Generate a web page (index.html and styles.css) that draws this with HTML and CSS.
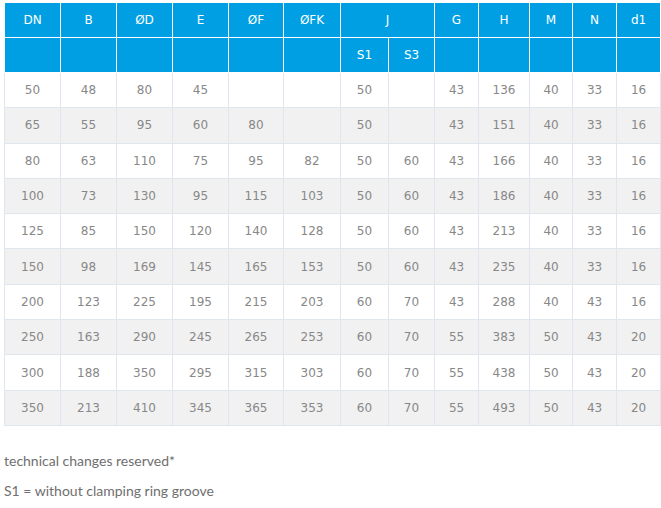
FILE: index.html
```html
<!DOCTYPE html>
<html>
<head>
<meta charset="utf-8">
<link rel="stylesheet" href="styles.css">
</head>
<body>
<div class="wrap">
<table class="dims">
<colgroup>
<col style="width:56px"><col style="width:56px"><col style="width:56px"><col style="width:56px"><col style="width:55px"><col style="width:57px"><col style="width:48px"><col style="width:46px"><col style="width:44px"><col style="width:51px"><col style="width:43px"><col style="width:44px"><col style="width:44px">
</colgroup>
<thead>
<tr class="h1"><th>DN</th><th>B</th><th>ØD</th><th>E</th><th>ØF</th><th>ØFK</th><th colspan="2">J</th><th>G</th><th>H</th><th>M</th><th>N</th><th>d1</th></tr>
<tr class="h2"><th></th><th></th><th></th><th></th><th></th><th></th><th>S1</th><th>S3</th><th></th><th></th><th></th><th></th><th></th></tr>
</thead>
<tbody>
<tr><td>50</td><td>48</td><td>80</td><td>45</td><td></td><td></td><td>50</td><td></td><td>43</td><td>136</td><td>40</td><td>33</td><td>16</td></tr>
<tr><td>65</td><td>55</td><td>95</td><td>60</td><td>80</td><td></td><td>50</td><td></td><td>43</td><td>151</td><td>40</td><td>33</td><td>16</td></tr>
<tr><td>80</td><td>63</td><td>110</td><td>75</td><td>95</td><td>82</td><td>50</td><td>60</td><td>43</td><td>166</td><td>40</td><td>33</td><td>16</td></tr>
<tr><td>100</td><td>73</td><td>130</td><td>95</td><td>115</td><td>103</td><td>50</td><td>60</td><td>43</td><td>186</td><td>40</td><td>33</td><td>16</td></tr>
<tr><td>125</td><td>85</td><td>150</td><td>120</td><td>140</td><td>128</td><td>50</td><td>60</td><td>43</td><td>213</td><td>40</td><td>33</td><td>16</td></tr>
<tr><td>150</td><td>98</td><td>169</td><td>145</td><td>165</td><td>153</td><td>50</td><td>60</td><td>43</td><td>235</td><td>40</td><td>33</td><td>16</td></tr>
<tr><td>200</td><td>123</td><td>225</td><td>195</td><td>215</td><td>203</td><td>60</td><td>70</td><td>43</td><td>288</td><td>40</td><td>43</td><td>16</td></tr>
<tr><td>250</td><td>163</td><td>290</td><td>245</td><td>265</td><td>253</td><td>60</td><td>70</td><td>55</td><td>383</td><td>50</td><td>43</td><td>20</td></tr>
<tr><td>300</td><td>188</td><td>350</td><td>295</td><td>315</td><td>303</td><td>60</td><td>70</td><td>55</td><td>438</td><td>50</td><td>43</td><td>20</td></tr>
<tr><td>350</td><td>213</td><td>410</td><td>345</td><td>365</td><td>353</td><td>60</td><td>70</td><td>55</td><td>493</td><td>50</td><td>43</td><td>20</td></tr>
</tbody>
</table>
<p class="note first">technical changes reserved*</p>
<p class="note">S1 = without clamping ring groove</p>
</div>
</body>
</html>
```
FILE: styles.css
```css
html, body {
  margin: 0;
  padding: 0;
  background: #fff;
}
.wrap {
  padding: 2px 1px 0 4px;
}
.dims {
  border-collapse: collapse;
  table-layout: fixed;
  width: 656px;
  font-family: "DejaVu Sans", Verdana, sans-serif;
  font-size: 12px;
}
.dims th {
  background: #009fe3;
  color: #fff;
  font-weight: normal;
  height: 34px;
  padding: 0;
  border: 1px solid #fff;
  text-align: center;
  vertical-align: middle;
}
.dims td {
  height: 34.3px;
  padding: 0;
  border: 1px solid #dfe6f0;
  color: #888;
  text-align: center;
  vertical-align: middle;
}
.dims tbody tr:nth-child(even) td {
  background: #f1f1f1;
}
.note {
  font-family: Lato, "Open Sans", sans-serif;
  font-size: 14px;
  color: #6f6f6f;
  margin: 0;
  line-height: 20px;
}
.note.first {
  margin-top: 25px;
  margin-bottom: 10px;
}
```
